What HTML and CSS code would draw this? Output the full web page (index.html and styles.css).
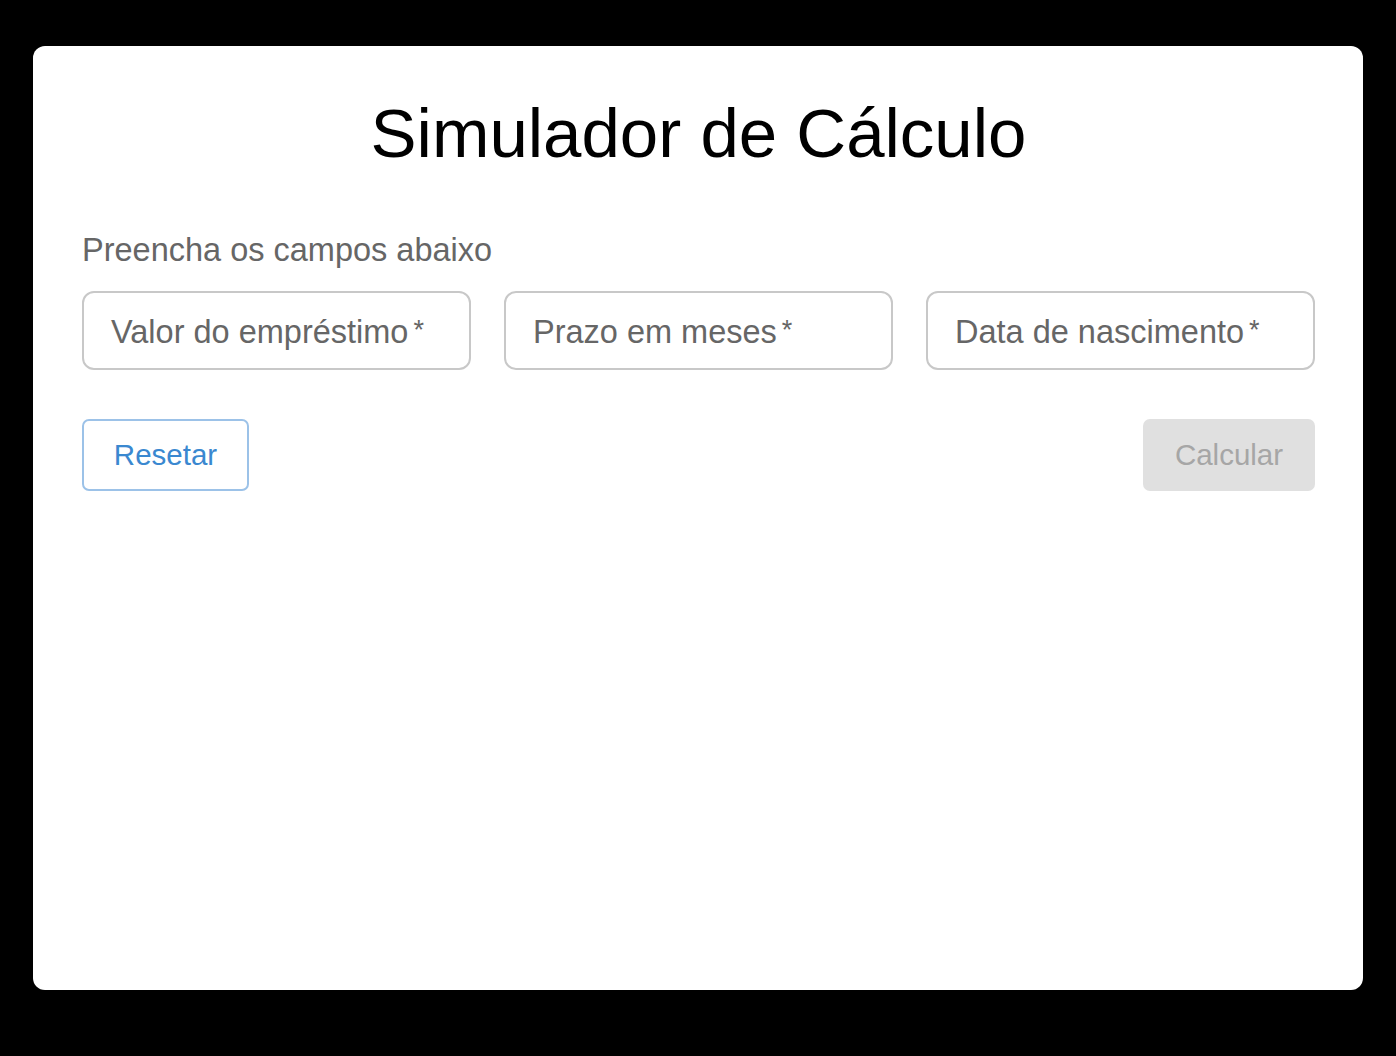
FILE: index.html
```html
<!DOCTYPE html>
<html lang="pt">
<head>
<meta charset="utf-8">
<title>Simulador de Cálculo</title>
<link rel="stylesheet" href="styles.css">
</head>
<body>
<main class="card">
  <h1 class="title">Simulador de Cálculo</h1>
  <p class="subtitle">Preencha os campos abaixo</p>
  <div class="fields">
    <div class="field"><span class="placeholder">Valor do empréstimo<span class="req">*</span></span></div>
    <div class="field"><span class="placeholder">Prazo em meses<span class="req">*</span></span></div>
    <div class="field"><span class="placeholder">Data de nascimento<span class="req">*</span></span></div>
  </div>
  <div class="actions">
    <button class="btn btn-outline" type="button">Resetar</button>
    <button class="btn btn-disabled" type="button" disabled>Calcular</button>
  </div>
</main>
</body>
</html>
```

FILE: styles.css
```css
html, body {
  margin: 0;
  padding: 0;
  background: #000;
}
body {
  padding: 46px 33px 66px 33px;
  font-family: "Liberation Sans", Arial, sans-serif;
}
.card {
  background: #fff;
  border-radius: 12px;
  height: 944px;
  box-sizing: border-box;
  padding: 48px 48px 0 49px;
}
.title {
  margin: 0;
  text-align: center;
  font-weight: 400;
  font-size: 69px;
  line-height: 80px;
  color: #000;
}
.subtitle {
  margin: 57px 0 0 0;
  font-size: 32.5px;
  line-height: 38px;
  color: #666;
}
.fields {
  margin-top: 22px;
  display: grid;
  grid-template-columns: repeat(3, 1fr);
  column-gap: 33px;
}
.field {
  height: 79px;
  box-sizing: border-box;
  border: 2px solid #c8c8c8;
  border-radius: 12px;
  display: flex;
  align-items: center;
  padding: 3px 0 0 27px;
}
.placeholder {
  font-size: 32.5px;
  color: #666;
}
.req {
  margin-left: 5px;
  font-size: 27px;
  vertical-align: 4px;
}
.actions {
  margin-top: 49px;
  display: flex;
  justify-content: space-between;
}
.btn {
  height: 72px;
  box-sizing: border-box;
  border-radius: 7px;
  font-family: inherit;
  font-size: 29.5px;
  padding: 0;
}
.btn-outline {
  width: 167px;
  background: #fff;
  border: 2px solid #9cc2e8;
  color: #3a88d0;
}
.btn-disabled {
  width: 172px;
  background: #e0e0e0;
  border: none;
  color: #a6a6a6;
}
```
